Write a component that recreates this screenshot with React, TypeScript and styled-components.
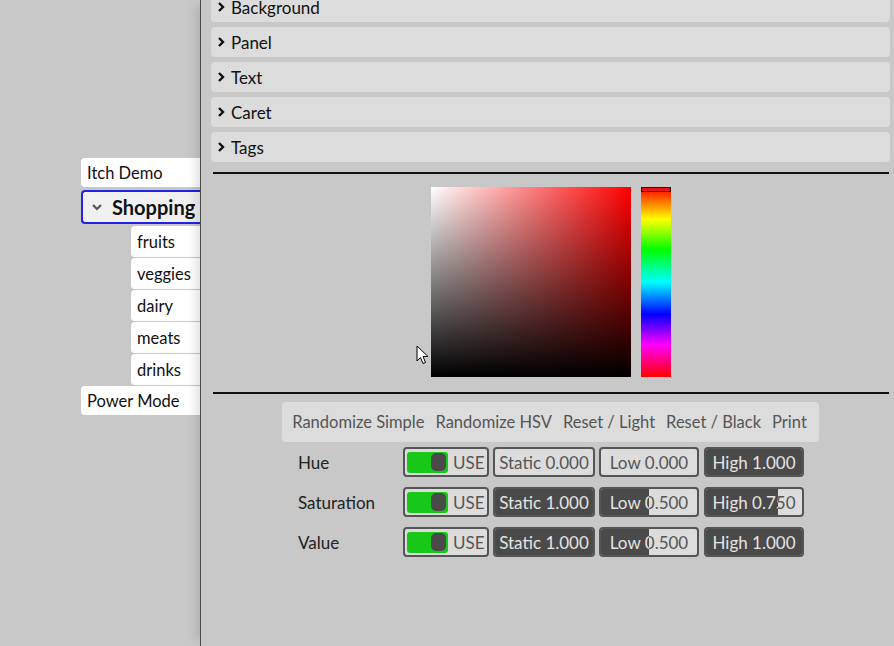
import React from "react";
import styled, { createGlobalStyle } from "styled-components";

const GlobalStyle = createGlobalStyle`
  html, body {
    margin: 0;
    padding: 0;
    background: #c8c8c8;
    font-family: Lato, "Noto Sans", sans-serif;
    overflow: hidden;
  }
`;

const sections = ["Background", "Panel", "Text", "Caret", "Tags"];
const children = ["fruits", "veggies", "dairy", "meats", "drinks"];
const actions = ["Randomize Simple", "Randomize HSV", "Reset / Light", "Reset / Black", "Print"];

type Channel = {
  name: string;
  stat: number;
  low: number;
  high: number;
  statOn: boolean;
};

const channels: Channel[] = [
  { name: "Hue", stat: 0, low: 0, high: 1, statOn: false },
  { name: "Saturation", stat: 1, low: 0.5, high: 0.75, statOn: true },
  { name: "Value", stat: 1, low: 0.5, high: 1, statOn: true },
];

const ChevronRight = () => (
  <svg width="9" height="12" viewBox="0 0 9 12">
    <polyline points="2,2 6,6 2,10" fill="none" stroke="#111" strokeWidth="2.4" />
  </svg>
);

const ChevronDown = () => (
  <svg width="12" height="8" viewBox="0 0 12 8">
    <polyline points="2,2 6,6 10,2" fill="none" stroke="#555" strokeWidth="2.2" />
  </svg>
);

const Pointer = () => (
  <svg width="14" height="20" viewBox="0 0 14 20">
    <path d="M1 1 L1 16 L4.5 12.5 L7 18.5 L9.5 17.5 L7 11.5 L12 11.5 Z" fill="#fff" stroke="#000" strokeWidth="1" />
  </svg>
);

const ValueBox = ({ label, value, fill, w }: { label: string; value: number; fill: number; w: number }) => (
  <Box $w={w}>
    <BoxText>
      {label} {value.toFixed(3)}
    </BoxText>
    <BoxFill style={{ clipPath: `inset(0 ${100 - fill * 100}% 0 0)` }}>
      <BoxText>
        {label} {value.toFixed(3)}
      </BoxText>
    </BoxFill>
  </Box>
);

export default function App() {
  return (
    <>
      <GlobalStyle />
      <Screen>
        <Sidebar>
          <TreeItem>Itch Demo</TreeItem>
          <TreeOpen>
            <ChevronDown />
            <span>Shopping</span>
          </TreeOpen>
          <Children>
            {children.map((c) => (
              <TreeChild key={c}>{c}</TreeChild>
            ))}
          </Children>
          <TreeItem>Power Mode</TreeItem>
        </Sidebar>
        <Panel>
          <Sections>
            {sections.map((s) => (
              <SectionRow key={s}>
                <ChevronRight />
                <span>{s}</span>
              </SectionRow>
            ))}
          </Sections>
          <Rule />
          <Picker>
            <SVSquare>
              <CursorMark>
                <Pointer />
              </CursorMark>
            </SVSquare>
            <HueBar>
              <HueMark />
            </HueBar>
          </Picker>
          <Rule />
          <ActionBar>
            {actions.map((a) => (
              <Action key={a}>{a}</Action>
            ))}
          </ActionBar>
          <Channels>
            {channels.map((ch) => (
              <ChannelRow key={ch.name}>
                <ChannelName>{ch.name}</ChannelName>
                <Toggle>
                  <Switch>
                    <Knob />
                  </Switch>
                  <span>USE</span>
                </Toggle>
                <ValueBox label="Static" value={ch.stat} fill={ch.statOn ? 1 : 0} w={102} />
                <ValueBox label="Low" value={ch.low} fill={ch.low} w={100} />
                <HighSlot>
                  <ValueBox label="High" value={ch.high} fill={ch.high} w={100} />
                </HighSlot>
              </ChannelRow>
            ))}
          </Channels>
        </Panel>
      </Screen>
    </>
  );
}

const Screen = styled.div`
  display: flex;
  width: 894px;
  height: 646px;
  overflow: hidden;
`;

const Sidebar = styled.div`
  width: 200px;
  flex-shrink: 0;
  padding: 158px 0 0 81px;
  box-sizing: border-box;
  display: flex;
  flex-direction: column;
`;

const TreeItem = styled.div`
  height: 29px;
  display: flex;
  align-items: center;
  padding-left: 6px;
  background: #fff;
  border-radius: 4px 0 0 4px;
  font-size: 16.5px;
  color: #111;
  margin-bottom: 3px;
`;

const TreeOpen = styled.div`
  height: 34px;
  box-sizing: border-box;
  display: flex;
  align-items: center;
  gap: 9px;
  padding-left: 8px;
  background: #f0f0f0;
  border: 2px solid #2121e8;
  border-right: none;
  border-radius: 4px 0 0 4px;
  font-size: 20px;
  font-weight: 700;
  color: #111;
  white-space: nowrap;
  overflow: hidden;
`;

const Children = styled.div`
  display: flex;
  flex-direction: column;
  gap: 1px;
  padding: 2px 0 1px 50px;
`;

const TreeChild = styled.div`
  height: 31px;
  display: flex;
  align-items: center;
  padding-left: 6px;
  background: #fff;
  border-radius: 4px 0 0 4px;
  font-size: 16.5px;
  color: #111;
`;

const Panel = styled.div`
  flex: 1;
  position: relative;
  z-index: 1;
  border-left: 1px solid #4a4a4a;
  box-shadow: -10px 0 10px -6px rgba(0, 0, 0, 0.12);
  padding: 0 4px 0 10px;
  display: flex;
  flex-direction: column;
`;

const Sections = styled.div`
  display: flex;
  flex-direction: column;
  gap: 5px;
  margin-top: -8px;
`;

const SectionRow = styled.div`
  height: 30px;
  display: flex;
  align-items: center;
  gap: 5px;
  padding-left: 6px;
  background: #dcdcdc;
  border-radius: 4px;
  font-size: 17px;
  color: #111;
`;

const Rule = styled.div`
  height: 2px;
  background: #111;
  margin: 10px 1px 0 2px;
`;

const Picker = styled.div`
  display: flex;
  justify-content: center;
  gap: 10px;
  margin: 13px 0 5px;
`;

const SVSquare = styled.div`
  position: relative;
  width: 200px;
  height: 190px;
  background: linear-gradient(to top, #000, rgba(0, 0, 0, 0)),
    linear-gradient(to right, #fff, #ff0000);
`;

const CursorMark = styled.div`
  position: absolute;
  left: -15px;
  top: 158px;
  line-height: 0;
`;

const HueBar = styled.div`
  position: relative;
  width: 30px;
  height: 190px;
  background: linear-gradient(
    to bottom,
    #ff0000 0%,
    #ffff00 17%,
    #00ff00 33%,
    #00ffff 50%,
    #0000ff 67%,
    #ff00ff 83%,
    #ff0000 100%
  );
`;

const HueMark = styled.div`
  position: absolute;
  left: 0;
  right: 0;
  top: 0;
  height: 5px;
  box-sizing: border-box;
  background: #ee1111;
  border: 1px solid #2a1010;
`;

const ActionBar = styled.div`
  align-self: center;
  display: flex;
  align-items: center;
  height: 40px;
  margin-top: 8px;
  padding: 0 12px 0 10px;
  gap: 11px;
  background: #dcdcdc;
  border-radius: 4px;
`;

const Action = styled.div`
  font-size: 16.5px;
  color: #555;
  white-space: nowrap;
`;

const Channels = styled.div`
  display: flex;
  flex-direction: column;
  gap: 10px;
  margin-top: 5px;
  padding-left: 87px;
`;

const ChannelRow = styled.div`
  display: flex;
  align-items: center;
  gap: 4px;
  height: 30px;
`;

const ChannelName = styled.div`
  width: 101px;
  font-size: 17px;
  color: #222;
`;

const Toggle = styled.div`
  width: 86px;
  height: 30px;
  box-sizing: border-box;
  display: flex;
  align-items: center;
  gap: 5px;
  padding-left: 2px;
  border: 2px solid #555;
  border-radius: 4px;
  background: #dcdcdc;
  font-size: 17px;
  color: #555;
`;

const Switch = styled.div`
  width: 41px;
  height: 21px;
  box-sizing: border-box;
  display: flex;
  justify-content: flex-end;
  align-items: center;
  padding-right: 2px;
  background: #18c818;
  border-radius: 3px;
`;

const Knob = styled.div`
  width: 15px;
  height: 18px;
  background: #4a4a4a;
  border-radius: 5px;
`;

const HighSlot = styled.div`
  margin-left: 1px;
  display: flex;
`;

const Box = styled.div<{ $w: number }>`
  position: relative;
  width: ${(p) => p.$w}px;
  height: 30px;
  box-sizing: border-box;
  border: 2px solid #555;
  border-radius: 4px;
  background: #dcdcdc;
  color: #555;
  overflow: hidden;
`;

const BoxFill = styled.div`
  position: absolute;
  inset: 0;
  background: #4a4a4a;
  color: #e4e4e4;
`;

const BoxText = styled.div`
  height: 26px;
  display: flex;
  align-items: center;
  justify-content: center;
  font-size: 17px;
  white-space: nowrap;
`;
